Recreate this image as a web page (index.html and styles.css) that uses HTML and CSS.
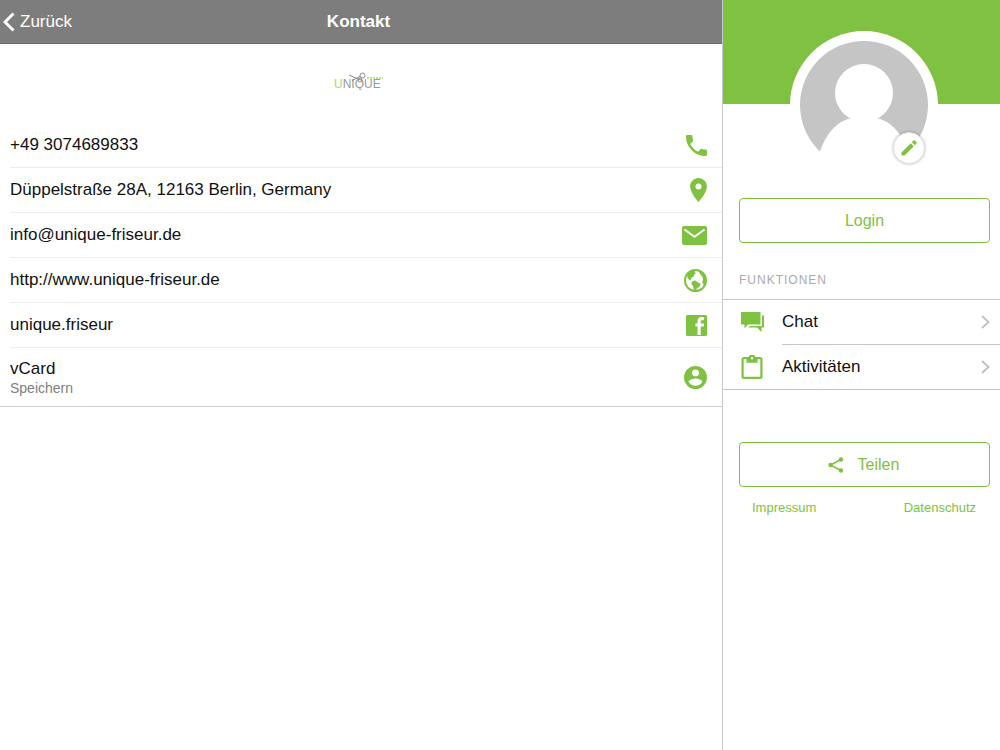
FILE: index.html
```html
<!DOCTYPE html>
<html lang="de">
<head>
  <meta charset="UTF-8">
  <meta name="viewport" content="width=device-width, initial-scale=1">
  <title>Kontakt</title>
  <link rel="stylesheet" href="styles.css">
</head>
<body>

  <main class="content">
    <header class="navbar">
      <button type="button" class="back">
        <svg width="12" height="20" viewBox="0 0 12 20"><path d="M10.500 1.500 2 10l8.500 8.500" fill="none" stroke="currentColor" stroke-width="3"/></svg>
        Zurück
      </button>
      <h1>Kontakt</h1>
    </header>

    <div class="logo">
      <svg width="50" height="18" viewBox="0 0 50 18">
        <text x="0" y="16"><tspan class="logo-u">U</tspan>NIQUE</text>
        <g fill="none" stroke="#888" stroke-width="1">
          <path d="M15 3l10 4.500M18 8.500l8-4"/>
          <circle cx="28.500" cy="3.500" r="2.500"/>
          <circle cx="26" cy="8" r="2"/>
        </g>
        <path d="M33 6h16" fill="none" stroke="#c3e28c" stroke-width="2" stroke-dasharray="2 1"/>
      </svg>
    </div>

    <ul class="contacts">
      <li>
        <a href="tel:+493074689833">+49 3074689833
          <svg width="21" height="21" viewBox="3 3 18 18"><path d="M6.620 10.790c1.440 2.830 3.760 5.140 6.590 6.590l2.200-2.200c.27-.27.67-.36 1.020-.24 1.120.37 2.330.57 3.570.57.55 0 1 .45 1 1V20c0 .55-.45 1-1 1-9.390 0-17-7.610-17-17 0-.55.45-1 1-1h3.500c.55 0 1 .45 1 1 0 1.250.2 2.450.57 3.570.11.35.03.74-.25 1.020l-2.200 2.200z"/></svg>
        </a>
      </li>
      <li>
        <a href="#karte">Düppelstraße 28A, 12163 Berlin, Germany
          <svg width="17" height="24" viewBox="5 2 14 20"><path d="M12 2C8.130 2 5 5.130 5 9c0 5.250 7 13 7 13s7-7.750 7-13c0-3.870-3.130-7-7-7zm0 9.500a2.500 2.500 0 1 1 0-5 2.500 2.500 0 0 1 0 5z"/></svg>
        </a>
      </li>
      <li>
        <a href="mailto:info@unique-friseur.de">info@unique-friseur.de
          <svg width="25" height="19" viewBox="0 0 25 19"><rect width="25" height="19" rx="2"/><path d="M2.500 3.500l10 7.200 10-7.200" fill="none" stroke="#fff" stroke-width="2"/></svg>
        </a>
      </li>
      <li>
        <a href="http://www.unique-friseur.de">http://www.unique-friseur.de
          <svg width="23" height="23" viewBox="0 0 24 24"><circle cx="12" cy="12" r="11" fill="none" stroke="currentColor" stroke-width="2"/><path d="M3.500 5 8 1.500l4.500-.5L11 3l1.500 1.500-2 1.500-.5 2-2.500 1.500L7 12l-1.500-.5L3.500 9zM9 12.500l3-.5 2.500 2 3 1.500-1.500 3-2.500 1.500-1 3-2-.5-1-4.500-2-3zM15.500 1.500l4 2L23 9l.5 4-1.500 5-2.500 1.500 1-3-1.500-3 1-3-1.500-3.500L16.500 5z"/></svg>
        </a>
      </li>
      <li>
        <a href="#facebook">unique.friseur
          <svg width="21" height="21" viewBox="2 2 20 20"><path d="M19 4v3h-2a1 1 0 0 0-1 1v2h3v3h-3v8h-3v-8h-2v-3h2V7.500C13 5.560 14.570 4 16.500 4M20.500 2h-17A1.500 1.500 0 0 0 2 3.500v17A1.500 1.500 0 0 0 3.500 22h17a1.500 1.500 0 0 0 1.500-1.500v-17A1.500 1.500 0 0 0 20.500 2z" fill-rule="evenodd"/></svg>
        </a>
      </li>
      <li class="vcard">
        <a href="#vcard">
          <span>vCard<small>Speichern</small></span>
          <svg width="23" height="23" viewBox="2 2 20 20"><path d="M12 2a10 10 0 1 0 0 20 10 10 0 0 0 0-20zm0 3a3 3 0 1 1 0 6 3 3 0 0 1 0-6zm0 14.200c-2.500 0-4.710-1.280-6-3.220.03-1.990 4-3.080 6-3.080s5.970 1.090 6 3.080a7.200 7.200 0 0 1-6 3.220z"/></svg>
        </a>
      </li>
    </ul>
  </main>

  <aside class="sidebar">
    <div class="cover">
      <div class="avatar">
        <svg width="128" height="128" viewBox="0 0 128 128">
          <circle cx="64" cy="64" r="64" fill="#c5c5c5"/>
          <circle cx="64" cy="52" r="29" fill="#fff"/>
          <path d="M20 110.500C26 92 38 80 50 77.500h28C90 80 102 92 108 110.500V128H20z" fill="#fff"/>
        </svg>
        <button type="button" class="edit" aria-label="Profilbild bearbeiten">
          <svg width="16" height="16" viewBox="0 0 16 16"><path d="M.5 12.500 9.800 3.200l3 3L3.500 15.500h-3zM10.800 2.200 12.500.5q.7-.5 1.300 0l1.700 1.700q.5.700 0 1.300l-1.700 1.700z"/></svg>
        </button>
      </div>
    </div>

    <button type="button" class="btn">Login</button>

    <h2>Funktionen</h2>
    <ul class="menu">
      <li>
        <a href="#chat">
          <svg class="icon" width="24" height="24" viewBox="0 0 24 24"><path d="M0 2h19.500v12.500H7L3.500 18.500v-4H0zM21 5.500h2v12h-2.500V22l-4.500-4.500H7.500L9 16h12z"/></svg>
          <span class="label">Chat
            <svg class="chevron" width="9" height="14" viewBox="0 0 9 14"><path d="M1 1l6.500 6L1 13"/></svg>
          </span>
        </a>
      </li>
      <li>
        <a href="#aktivitaeten">
          <svg class="icon" width="24" height="24" viewBox="0 0 24 24"><path d="M19 2h-4.600a3.600 3.600 0 0 0-6.800 0H3A2.500 2.500 0 0 0 .5 4.500v17A2.500 2.500 0 0 0 3 24h16a2.500 2.500 0 0 0 2.500-2.500v-17A2.500 2.500 0 0 0 19 2zm-8 0a1.200 1.200 0 1 1 0 2.400A1.200 1.200 0 0 1 11 2zm8.300 19.800H2.700V4.200h2.800v3.600h11V4.200h2.800z"/></svg>
          <span class="label">Aktivitäten
            <svg class="chevron" width="9" height="14" viewBox="0 0 9 14"><path d="M1 1l6.500 6L1 13"/></svg>
          </span>
        </a>
      </li>
    </ul>

    <button type="button" class="btn share">
      <svg width="16" height="16" viewBox="0 0 16 16"><path d="M13 2.500 2.500 8 13 13.500" fill="none" stroke="currentColor" stroke-width="1.500"/><circle cx="13" cy="2.500" r="2.200"/><circle cx="2.500" cy="8" r="2.200"/><circle cx="13" cy="13.500" r="2.200"/></svg>
      Teilen
    </button>

    <nav class="links">
      <a href="#impressum">Impressum</a>
      <a href="#datenschutz">Datenschutz</a>
    </nav>
  </aside>

</body>
</html>
```
FILE: styles.css
```css
* {
  box-sizing: border-box;
}
body {
  margin: 0;
  min-height: 100vh;
  display: flex;
  background: #fff;
  color: #111;
  font-family: "Liberation Sans", Arial, sans-serif;
  font-size: 17px;
}
ul {
  list-style: none;
  margin: 0;
  padding: 0;
}
a {
  color: inherit;
  text-decoration: none;
}
button {
  font-family: inherit;
  cursor: pointer;
}
svg {
  display: block;
  flex: none;
  fill: currentColor;
}

/* Contact page */
.content {
  flex: 1;
}
.navbar {
  display: grid;
  grid-template-columns: 1fr auto 1fr;
  align-items: center;
  height: 44px;
  padding-right: 5px;
  background: #7d7d7d;
  border-bottom: 1px solid #6c6c6c;
  color: #fff;
}
.navbar h1 {
  margin: 0;
  font-size: 17px;
  line-height: 22px;
}
.back {
  display: flex;
  align-items: center;
  justify-self: start;
  gap: 5px;
  padding: 0 3px;
  border: 0;
  background: none;
  color: #fff;
  font-size: 17px;
}
.logo {
  display: flex;
  justify-content: center;
  padding: 28px 5px 33px 0;
}
.logo text {
  fill: #999;
  font-size: 12px;
}
.logo .logo-u {
  fill: #b0d860;
}
.contacts {
  border-bottom: 1px solid #d0d0d6;
}
.contacts li {
  margin-left: 10px;
  border-bottom: 1px solid #ececee;
}
.contacts a {
  display: flex;
  align-items: center;
  justify-content: space-between;
  height: 44px;
  padding-right: 15px;
  line-height: 22px;
}
.contacts svg {
  color: #7fc241;
}
.contacts .vcard {
  border-bottom: 0;
}
.contacts .vcard a {
  height: 58px;
}
.vcard small {
  display: block;
  color: #808080;
  font-size: 14px;
  line-height: 16px;
}

/* Profile sidebar */
.sidebar {
  width: 278px;
  border-left: 1px solid #c8c8cc;
}
.cover {
  height: 104px;
  margin-bottom: 94px;
  padding: 31px 0 0 5px;
  background: #7fc241;
}
.avatar {
  position: relative;
  width: 148px;
  height: 148px;
  margin: 0 auto;
  padding: 10px;
  border-radius: 50%;
  background: #fff;
}
.edit {
  position: absolute;
  right: 13px;
  bottom: 15px;
  display: flex;
  align-items: center;
  justify-content: center;
  width: 32px;
  height: 32px;
  padding: 0;
  border: 1px solid #e2e2e2;
  border-radius: 50%;
  background: #fff;
  box-shadow: 0 0 3px rgba(0, 0, 0, 0.3);
  color: #7fc241;
}
.btn {
  display: flex;
  align-items: center;
  justify-content: center;
  gap: 14px;
  width: calc(100% - 26px);
  height: 45px;
  margin: 0 10px 0 16px;
  border: 1px solid #7fc241;
  border-radius: 4px;
  background: #fff;
  color: #7fc241;
  font-size: 16px;
}
.sidebar h2 {
  margin: 30px 16px 12px;
  color: #aaa;
  font-size: 12px;
  font-weight: normal;
  line-height: 14px;
  letter-spacing: 1px;
  text-transform: uppercase;
}
.menu {
  margin-bottom: 52px;
  border-top: 1px solid #c8c8cc;
  border-bottom: 1px solid #c8c8cc;
}
.menu a {
  display: flex;
  align-items: center;
  gap: 17px;
  padding-left: 18px;
  line-height: 22px;
}
.menu .icon {
  color: #7fc241;
}
.label {
  display: flex;
  flex: 1;
  align-items: center;
  justify-content: space-between;
  height: 44px;
  padding-right: 10px;
}
.menu li + li .label {
  height: 45px;
  border-top: 1px solid #c8c8cc;
}
.chevron path {
  fill: none;
  stroke: #c4c4c8;
  stroke-width: 2;
}
.share {
  padding-right: 8px;
}
.links {
  display: flex;
  justify-content: space-between;
  padding: 13px 24px 0 29px;
  color: #7fc241;
  font-size: 13px;
}
```
